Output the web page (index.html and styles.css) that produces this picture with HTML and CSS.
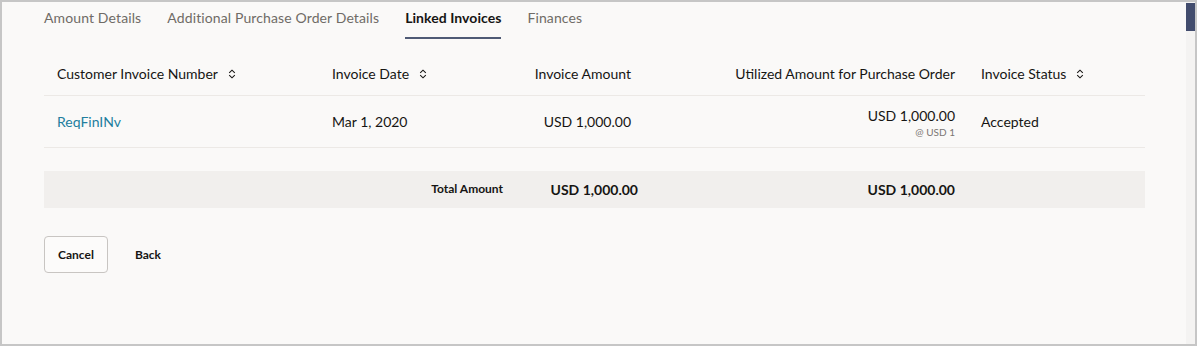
FILE: index.html
```html
<!DOCTYPE html>
<html lang="en">
<head>
    <meta charset="UTF-8">
    <title>Linked Invoices</title>
    <link rel="stylesheet" href="styles.css">
</head>
<body>
    <div class="frame">
        <div class="content">
            <div class="tabs">
                <div class="tab">Amount Details</div>
                <div class="tab">Additional Purchase Order Details</div>
                <div class="tab active">Linked Invoices</div>
                <div class="tab">Finances</div>
            </div>

            <div class="table">
                <div class="row head">
                    <div class="cell">Customer Invoice Number <svg class="sort" viewBox="0 0 8 10"><path d="M1.2 3.8 L4 1.2 L6.8 3.8 M1.2 6.2 L4 8.8 L6.8 6.2"/></svg></div>
                    <div class="cell">Invoice Date <svg class="sort" viewBox="0 0 8 10"><path d="M1.2 3.8 L4 1.2 L6.8 3.8 M1.2 6.2 L4 8.8 L6.8 6.2"/></svg></div>
                    <div class="cell num">Invoice Amount</div>
                    <div class="cell num">Utilized Amount for Purchase Order</div>
                    <div class="cell">Invoice Status <svg class="sort" viewBox="0 0 8 10"><path d="M1.2 3.8 L4 1.2 L6.8 3.8 M1.2 6.2 L4 8.8 L6.8 6.2"/></svg></div>
                </div>
                <div class="row body">
                    <div class="cell"><a class="link" href="#">ReqFinINv</a></div>
                    <div class="cell">Mar 1, 2020</div>
                    <div class="cell num">USD 1,000.00</div>
                    <div class="cell num stack">
                        <span>USD 1,000.00</span>
                        <span class="rate">@ USD 1</span>
                    </div>
                    <div class="cell">Accepted</div>
                </div>
                <div class="row total">
                    <div class="cell"></div>
                    <div class="cell num label">Total Amount</div>
                    <div class="cell num sum first">USD 1,000.00</div>
                    <div class="cell num sum">USD 1,000.00</div>
                    <div class="cell"></div>
                </div>
            </div>

            <div class="actions">
                <button class="btn outline">Cancel</button>
                <button class="btn plain">Back</button>
            </div>
        </div>
        <div class="scrollbar"><div class="thumb"></div></div>
    </div>
</body>
</html>
```

FILE: styles.css
```css
body {
    margin: 0;
    background: #ffffff;
    font-family: Lato, 'Noto Sans', Arial, sans-serif;
    color: #161513;
}
.frame {
    width: 1197px;
    height: 346px;
    box-sizing: border-box;
    border: 2px solid #c6c6c6;
    background: #faf9f8;
    display: flex;
}
.content {
    flex: 1;
    padding: 0 0 0 42px;
}
.scrollbar {
    width: 9px;
    background: #f4f3f2;
}
.thumb {
    height: 28px;
    margin-top: 1px;
    background: #424c6d;
}
.tabs {
    display: flex;
    gap: 26px;
    padding-top: 6px;
}
.tab {
    font-size: 14px;
    line-height: 20px;
    letter-spacing: 0.12px;
    color: #6f6b66;
    padding-bottom: 9px;
    border-bottom: 2px solid transparent;
}
.tab.active {
    color: #161513;
    font-weight: 700;
    letter-spacing: 0.05px;
    border-bottom-color: #4f5a75;
}
.table {
    width: 1101px;
    margin-top: 14px;
}
.row {
    display: grid;
    grid-template-columns: 275px 197px 128px 324px 177px;
    align-items: center;
}
.cell {
    padding: 0 13px;
    font-size: 14px;
    line-height: 20px;
    display: flex;
    align-items: center;
}
.cell.num {
    justify-content: flex-end;
}
.head {
    height: 42px;
    border-bottom: 1px solid #ece9e6;
}
.sort {
    width: 8px;
    height: 10px;
    margin-left: 10px;
    fill: none;
    stroke: #161513;
    stroke-width: 1.1;
}
.body {
    height: 51px;
    border-bottom: 1px solid #ece9e6;
}
.link {
    color: #227e9e;
    text-decoration: none;
}
.stack {
    flex-direction: column;
    align-items: flex-end;
}
.rate {
    font-size: 10px;
    line-height: 12px;
    color: #7a7672;
}
.total {
    margin-top: 23px;
    height: 37px;
    background: #f1efed;
}
.label {
    font-size: 12px;
    font-weight: 700;
    margin-top: -2px;
}
.sum {
    font-weight: 700;
}
.sum.first {
    padding-right: 6px;
}
.actions {
    display: flex;
    gap: 13px;
    margin-top: 28px;
}
.btn {
    font-family: inherit;
    font-size: 12px;
    font-weight: 700;
    color: #161513;
    height: 37px;
    padding: 0 13px;
    border-radius: 4px;
    background: transparent;
    border: 1px solid transparent;
    cursor: pointer;
}
.btn.outline {
    border-color: #c8c5c2;
    background: #fcfbfa;
}
```
